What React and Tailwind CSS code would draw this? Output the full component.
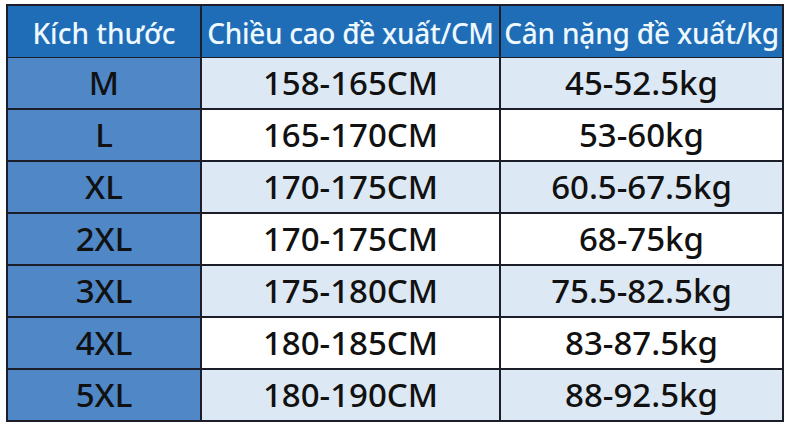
const rows = [
  ['M', '158-165CM', '45-52.5kg'],
  ['L', '165-170CM', '53-60kg'],
  ['XL', '170-175CM', '60.5-67.5kg'],
  ['2XL', '170-175CM', '68-75kg'],
  ['3XL', '175-180CM', '75.5-82.5kg'],
  ['4XL', '180-185CM', '83-87.5kg'],
  ['5XL', '180-190CM', '88-92.5kg'],
];

export default function App() {
  return (
    <div className="w-[790px] h-[431px] bg-white pt-[4px] pl-[6px]" style={{ fontFamily: '"Noto Sans", "Open Sans", sans-serif' }}>
      <div className="grid grid-cols-[192px_297px_281px] auto-rows-[50px] gap-[2px] p-[2px] bg-[#1b1d29] w-fit">
        <div className="h-[51px] bg-[#1f6db6] text-[#eef8ff] text-[28px] font-medium flex items-center justify-center pt-[3px]">Kích thước</div>
        <div className="h-[51px] bg-[#1f6db6] text-[#eef8ff] text-[28px] font-medium flex items-center justify-center pt-[3px] tracking-[-0.3px]">Chiều cao đề xuất/CM</div>
        <div className="h-[51px] bg-[#1f6db6] text-[#eef8ff] text-[28px] font-medium flex items-center justify-center pt-[3px] tracking-[-0.2px]">Cân nặng đề xuất/kg</div>
        {rows.map(([size, h, w], i) => (
          <>
            <div key={size + 'a'} className="bg-[#4f87c7] text-[#111] text-[33px] font-medium flex items-center justify-center">{size}</div>
            <div key={size + 'b'} className={`${i % 2 === 0 ? 'bg-[#dce8f3]' : 'bg-white'} text-[#111] text-[33px] font-medium flex items-center justify-center`}>{h}</div>
            <div key={size + 'c'} className={`${i % 2 === 0 ? 'bg-[#dce8f3]' : 'bg-white'} text-[#111] text-[33px] font-medium flex items-center justify-center`}>{w}</div>
          </>
        ))}
      </div>
    </div>
  );
}
